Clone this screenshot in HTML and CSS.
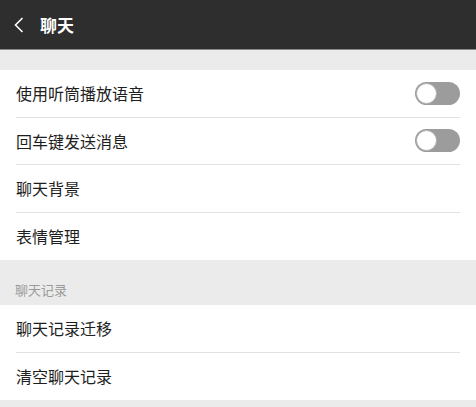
FILE: index.html
```html
<!DOCTYPE html>
<html lang="zh">
<head>
<meta charset="utf-8">
<link rel="stylesheet" href="styles.css">
</head>
<body>
<div class="page">
  <header class="topbar">
    <svg class="back" width="12" height="18" viewBox="0 0 12 18"><path d="M9.5 2 L2.5 9 L9.5 16" fill="none" stroke="#ffffff" stroke-width="1.6"/></svg>
    <span class="title">聊天</span>
  </header>
  <div class="gap"></div>
  <div class="group">
    <div class="row"><span class="label">使用听筒播放语音</span><span class="switch"><span class="knob"></span></span></div>
    <div class="row"><span class="label">回车键发送消息</span><span class="switch"><span class="knob"></span></span></div>
    <div class="row"><span class="label">聊天背景</span></div>
    <div class="row last"><span class="label">表情管理</span></div>
  </div>
  <div class="section">聊天记录</div>
  <div class="group">
    <div class="row"><span class="label">聊天记录迁移</span></div>
    <div class="row last"><span class="label">清空聊天记录</span></div>
  </div>
  <div class="rest"></div>
</div>
</body>
</html>
```
FILE: styles.css
```css
html, body {
  margin: 0;
  padding: 0;
}
body {
  background: #ebebeb;
  font-family: "Noto Sans CJK SC", "Noto Sans", sans-serif;
  width: 476px;
  height: 407px;
  overflow: hidden;
}
.topbar {
  height: 50px;
  background: #2e2e2e;
  border-bottom: 1px solid #8a8a8a;
  box-sizing: border-box;
  display: flex;
  align-items: center;
  padding-left: 13px;
}
.back {
  display: block;
}
.title {
  color: #ffffff;
  font-size: 17px;
  font-weight: bold;
  margin-left: 15px;
  line-height: 1;
}
.gap {
  height: 20px;
  background: #ebebeb;
}
.group {
  background: #ffffff;
}
.row {
  height: 46.5px;
  margin-left: 16px;
  margin-right: 16px;
  border-bottom: 1px solid #e2e2e2;
  display: flex;
  align-items: center;
  justify-content: space-between;
}
.row.last {
  border-bottom: none;
  height: 47.5px;
}
.label {
  font-size: 16px;
  color: #1e1e1e;
  line-height: 1;
}
.switch {
  width: 45px;
  height: 23px;
  border-radius: 12px;
  background: #9c9c9c;
  position: relative;
  box-sizing: border-box;
}
.knob {
  position: absolute;
  left: 1px;
  top: 1px;
  width: 21px;
  height: 21px;
  border-radius: 50%;
  background: #ffffff;
  box-sizing: border-box;
  border: 1px solid #b0b0b0;
}
.section {
  height: 45px;
  box-sizing: border-box;
  padding-left: 15px;
  padding-top: 23px;
  font-size: 13px;
  color: #9a9a9a;
  line-height: 14px;
}
.rest {
  height: 10px;
}
```
